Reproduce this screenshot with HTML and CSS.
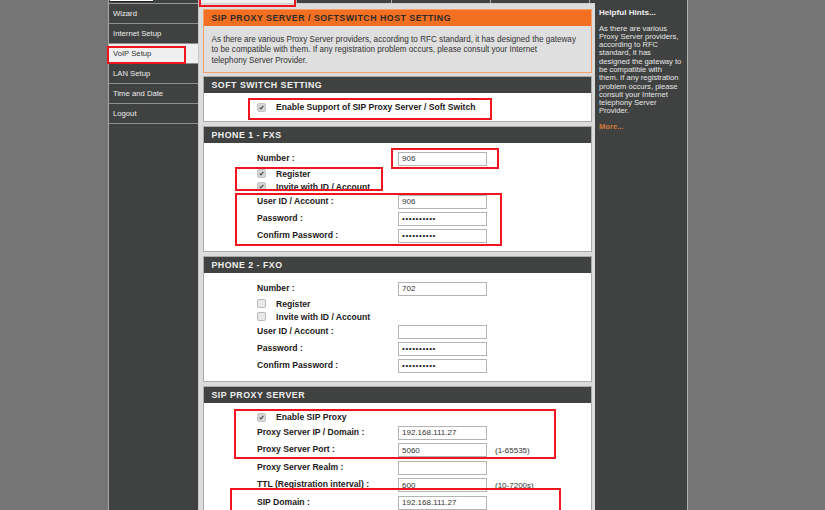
FILE: index.html
```html
<!DOCTYPE html>
<html lang="en">
<head>
<meta charset="utf-8">
<title>VoIP Setup</title>
<link rel="stylesheet" href="styles.css">
</head>
<body>
<div class="page">
  <aside class="nav">
    <div class="nav-top"><span class="nav-box"></span></div>
    <a class="nav-item">Wizard</a>
    <a class="nav-item">Internet Setup</a>
    <a class="nav-item active">VoIP Setup</a>
    <a class="nav-item">LAN Setup</a>
    <a class="nav-item">Time and Date</a>
    <a class="nav-item">Logout</a>
  </aside>

  <main class="main">
    <div class="tabs">
      <span class="tab active"></span>
      <span class="tab t2"></span>
      <span class="tab t3"></span>
      <span class="tab t4"></span>
    </div>
    <div class="content">
      <section class="intro">
        <h2 class="intro-title">SIP PROXY SERVER / SOFTSWITCH HOST SETTING</h2>
        <p class="intro-text">As there are various Proxy Server providers, according to RFC standard, it has designed the gateway<br>to be compatible with them. If any registration problem occurs, please consult your Internet<br>telephony Server Provider.</p>
      </section>

      <section class="box">
        <h3 class="box-title">SOFT SWITCH SETTING</h3>
        <div class="box-body soft-body">
          <div class="row check-row">
            <span class="cb checked"><svg viewBox="0 0 9 9"><path d="M2.2 4.6 L3.8 6.3 L6.9 2.4" /></svg></span>
            <span class="label">Enable Support of SIP Proxy Server / Soft Switch</span>
          </div>
        </div>
      </section>

      <section class="box">
        <h3 class="box-title">PHONE 1 - FXS</h3>
        <div class="box-body phone-body">
          <div class="row"><span class="label field">Number :</span><input class="inp" type="text" value="906" readonly></div>
          <div class="row check-row">
            <span class="cb checked"><svg viewBox="0 0 9 9"><path d="M2.2 4.6 L3.8 6.3 L6.9 2.4" /></svg></span>
            <span class="label">Register</span>
          </div>
          <div class="row check-row">
            <span class="cb checked"><svg viewBox="0 0 9 9"><path d="M2.2 4.6 L3.8 6.3 L6.9 2.4" /></svg></span>
            <span class="label">Invite with ID / Account</span>
          </div>
          <div class="row"><span class="label field">User ID / Account :</span><input class="inp" type="text" value="906" readonly></div>
          <div class="row"><span class="label field">Password :</span><input class="inp pw" type="password" value="abcdefghij" readonly></div>
          <div class="row"><span class="label field">Confirm Password :</span><input class="inp pw" type="password" value="abcdefghij" readonly></div>
        </div>
      </section>

      <section class="box">
        <h3 class="box-title">PHONE 2 - FXO</h3>
        <div class="box-body phone-body">
          <div class="row"><span class="label field">Number :</span><input class="inp" type="text" value="702" readonly></div>
          <div class="row check-row">
            <span class="cb"></span>
            <span class="label">Register</span>
          </div>
          <div class="row check-row">
            <span class="cb"></span>
            <span class="label">Invite with ID / Account</span>
          </div>
          <div class="row"><span class="label field">User ID / Account :</span><input class="inp" type="text" value="" readonly></div>
          <div class="row"><span class="label field">Password :</span><input class="inp pw" type="password" value="abcdefghij" readonly></div>
          <div class="row"><span class="label field">Confirm Password :</span><input class="inp pw" type="password" value="abcdefghij" readonly></div>
        </div>
      </section>

      <section class="box">
        <h3 class="box-title">SIP PROXY SERVER</h3>
        <div class="box-body sip-body">
          <div class="row check-row sip-check">
            <span class="cb checked"><svg viewBox="0 0 9 9"><path d="M2.2 4.6 L3.8 6.3 L6.9 2.4" /></svg></span>
            <span class="label">Enable SIP Proxy</span>
          </div>
          <div class="row sip-row"><span class="label field">Proxy Server IP / Domain :</span><input class="inp" type="text" value="192.168.111.27" readonly></div>
          <div class="row sip-row"><span class="label field">Proxy Server Port :</span><input class="inp" type="text" value="5060" readonly><span class="hint">(1-65535)</span></div>
          <div class="row sip-row"><span class="label field">Proxy Server Realm :</span><input class="inp" type="text" value="" readonly></div>
          <div class="row sip-row"><span class="label field">TTL (Registration interval) :</span><input class="inp" type="text" value="600" readonly><span class="hint">(10-7200s)</span></div>
          <div class="row sip-row"><span class="label field">SIP Domain :</span><input class="inp" type="text" value="192.168.111.27" readonly></div>
        </div>
      </section>
    </div>
  </main>

  <aside class="hints">
    <h4 class="hints-title">Helpful Hints...</h4>
    <p class="hints-text">As there are various<br>Proxy Server providers,<br>according to RFC<br>standard, it has<br>designed the gateway to<br>be compatible with<br>them. If any registration<br>problem occurs, please<br>consult your Internet<br>telephony Server<br>Provider.</p>
    <a class="hints-more">More...</a>
  </aside>
</div>

<div class="mark mark-tab"></div>
<div class="mark mark-nav"></div>
<div class="mark mark-soft"></div>
<div class="mark mark-number"></div>
<div class="mark mark-register"></div>
<div class="mark mark-account"></div>
<div class="mark mark-sip"></div>
<div class="mark mark-domain"></div>
</body>
</html>
```

FILE: styles.css
```css
* { box-sizing: border-box; }

html, body {
  margin: 0;
  padding: 0;
  background: #757575;
  height: 510px;
  overflow: hidden;
}

body {
  position: relative;
  font-family: "Liberation Sans", Arial, sans-serif;
  color: #333;
}

.page {
  display: flex;
  margin-left: 108px;
  width: 580px;
  height: 510px;
}

/* ---------- left navigation ---------- */
.nav {
  width: 90px;
  flex: none;
  background: #404241;
  border-left: 1px solid #a6a6a6;
  display: flex;
  flex-direction: column;
}

.nav-top {
  height: 4px;
  border-bottom: 1px solid #9a9a9a;
}

.nav-box {
  display: block;
  width: 43px;
  height: 2px;
  margin-left: 1px;
  background: #fff;
  border-bottom: 1px solid #222;
}

.nav-item {
  display: block;
  height: 20px;
  line-height: 19px;
  padding-left: 4px;
  font-size: 7.7px;
  color: #ececec;
  border-bottom: 1px solid #8f8f8f;
  cursor: pointer;
}

.nav-item.active {
  background: #efefef;
  color: #333;
}

/* ---------- main column ---------- */
.main {
  width: 397px;
  flex: none;
  background: #dcdcdc;
  border-left: 1px solid #c9c9c9;
  display: flex;
  flex-direction: column;
}

.tabs {
  display: flex;
  height: 4px;
  background: #404241;
  border-bottom: 1px solid #cfcfcf;
}

.tab {
  display: block;
  height: 3px;
  border-right: 1px solid #a9a9a9;
}

.tab.active { width: 98px; background: #efefef; }
.tab.t2 { width: 95px; }
.tab.t3 { width: 99px; }
.tab.t4 { width: 99px; }

.content {
  padding: 5px 3px 0 4px;
}

/* intro box */
.intro {
  border: 1px solid #f4a06c;
  background: #dfdfdf;
  margin-bottom: 3px;
}

.intro-title {
  margin: 0;
  height: 16px;
  line-height: 16px;
  background: #f36f21;
  color: #2e2a28;
  font-size: 8.8px;
  font-weight: bold;
  letter-spacing: 0.5px;
  padding-left: 7.5px;
}

.intro-text {
  margin: 0;
  height: 46px;
  padding: 8.5px 7.5px 0;
  font-size: 8.15px;
  line-height: 10.7px;
  color: #333;
}

/* sections */
.box {
  border: 1px solid #ababab;
  background: #fff;
  margin-bottom: 4px;
}

.box-title {
  margin: 0;
  height: 16px;
  line-height: 16px;
  background: #404241;
  color: #f0f0f0;
  font-size: 8.8px;
  font-weight: bold;
  letter-spacing: 0.5px;
  padding-left: 7.5px;
}

.box-body {
  padding-left: 53px;
}

.soft-body {
  height: 28px;
  display: flex;
  align-items: center;
}

.phone-body {
  height: 108px;
  padding-top: 7px;
}

.sip-body {
  height: 120px;
  padding-top: 7px;
}

.row {
  display: flex;
  align-items: center;
  height: 17px;
}

.check-row { height: 13px; }
.sip-check { height: 14px; }
.sip-row { height: 17.5px; }

.label {
  font-size: 8.6px;
  font-weight: bold;
  color: #1d1a1a;
  white-space: nowrap;
}

.label.field {
  width: 141px;
  flex: none;
  margin-top: -2px;
}

.inp {
  width: 89px;
  height: 14px;
  flex: none;
  margin: 0;
  padding: 0 0 0 3px;
  border: 1px solid #b4b4b4;
  background: #fff;
  font-family: "Liberation Sans", Arial, sans-serif;
  font-size: 8px;
  color: #333;
  outline: none;
}

.inp.pw {
  font-size: 8px;
  letter-spacing: 0.6px;
  color: #222;
}

.hint {
  margin-left: 8px;
  font-size: 8px;
  color: #333;
}

/* checkboxes */
.cb {
  width: 9px;
  height: 9px;
  flex: none;
  margin-right: 10px;
  border: 1px solid #b8b8b8;
  border-radius: 2px;
  background: #e9e9e9;
  display: flex;
}

.cb.checked {
  background: #d6d6d6;
  border-color: #c2c2c2;
}

.cb svg {
  width: 7px;
  height: 7px;
}

.cb path {
  fill: none;
  stroke: #4e4e4e;
  stroke-width: 1.6;
}

/* ---------- hints column ---------- */
.hints {
  width: 93px;
  flex: none;
  background: #404241;
  border-right: 1px solid #b0b0b0;
  padding: 8px 3px 0 4px;
  color: #e6e6e6;
}

.hints-title {
  margin: 0;
  font-size: 8.1px;
  line-height: 10px;
  font-weight: bold;
  color: #f0f0f0;
}

.hints-text {
  margin: 6.5px 0 0;
  font-size: 7.6px;
  line-height: 8.3px;
}

.hints-more {
  display: block;
  margin-top: 7px;
  font-size: 7.6px;
  line-height: 8.3px;
  font-weight: bold;
  color: #d2763a;
}

/* ---------- red annotation boxes ---------- */
.mark {
  position: absolute;
  border: 2px solid #f0141e;
  pointer-events: none;
}

.mark-tab { left: 199px; top: -3px; width: 97px; height: 10px; }
.mark-nav { left: 107px; top: 46px; width: 79px; height: 18px; }
.mark-soft { left: 248px; top: 98px; width: 244px; height: 22px; }
.mark-number { left: 391px; top: 148px; width: 108px; height: 21px; }
.mark-register { left: 235px; top: 167px; width: 148px; height: 24px; }
.mark-account { left: 235px; top: 193px; width: 267px; height: 53px; }
.mark-sip { left: 234px; top: 409px; width: 322px; height: 50px; }
.mark-domain { left: 230px; top: 488px; width: 331px; height: 30px; }
```
